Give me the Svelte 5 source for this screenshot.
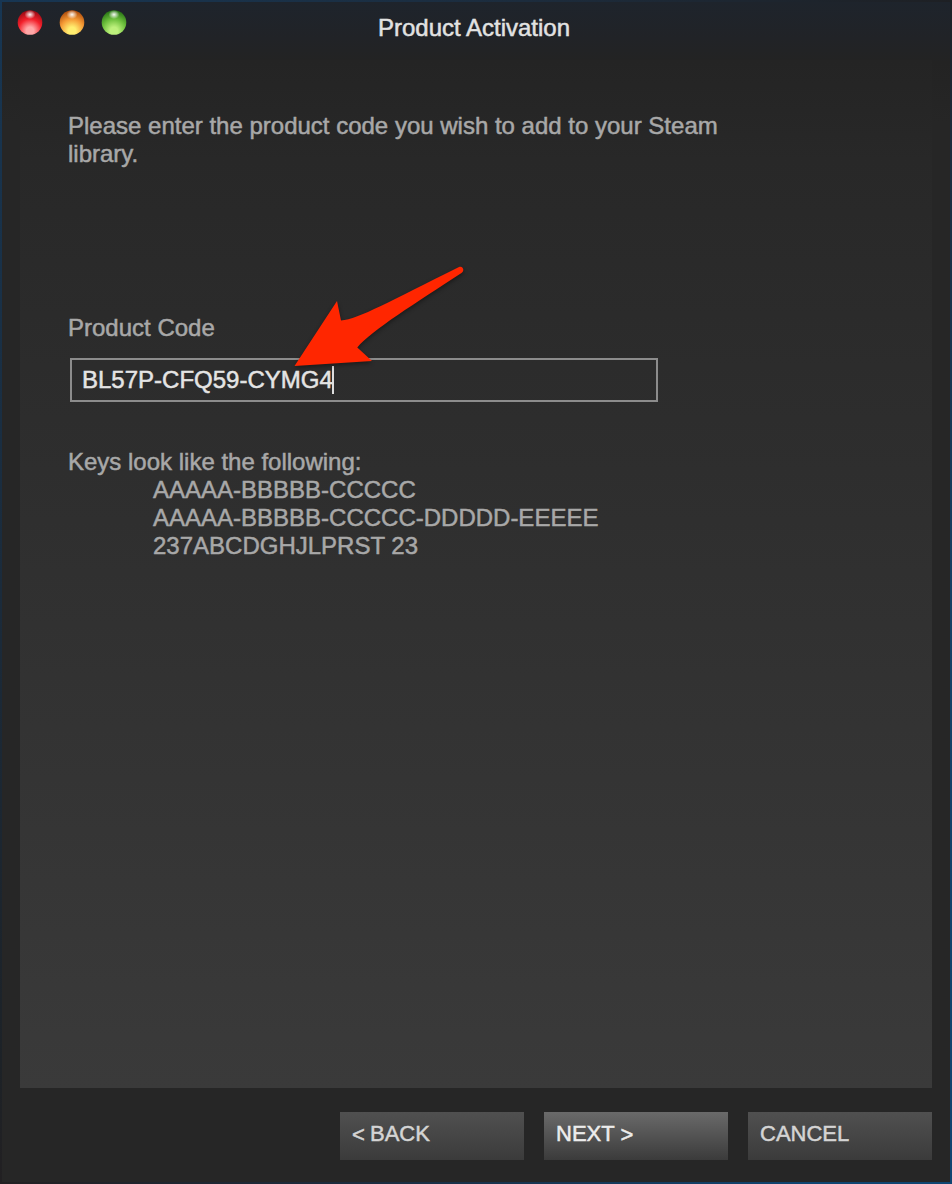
<script>
  let code = $state('BL57P-CFQ59-CYMG4');
  const examples = ['AAAAA-BBBBB-CCCCC', 'AAAAA-BBBBB-CCCCC-DDDDD-EEEEE', '237ABCDGHJLPRST 23'];
  const lights = [
    { name: 'close', edge: '#8d0710', mid: '#f3202b', glow: '#ffa8a8' },
    { name: 'minimize', edge: '#a34106', mid: '#f59a35', glow: '#ffee70' },
    { name: 'zoom', edge: '#1f6a10', mid: '#6cbf3c', glow: '#bdf07c' }
  ];
</script>

<div class="frame">
  <div class="window">
    <header>
      <div class="lights">
        {#each lights as l}
          <svg width="26" height="26" viewBox="0 0 26 26" aria-label={l.name}>
            <defs>
              <radialGradient id={l.name} cx="50%" cy="84%" r="86%">
                <stop offset="0" stop-color={l.glow} />
                <stop offset=".18" stop-color={l.glow} />
                <stop offset=".56" stop-color={l.mid} />
                <stop offset="1" stop-color={l.edge} />
              </radialGradient>
              <radialGradient id={l.name + '-shine'}>
                <stop offset="0" stop-color="#fff" stop-opacity=".95" />
                <stop offset="1" stop-color="#fff" stop-opacity="0" />
              </radialGradient>
            </defs>
            <circle cx="13" cy="12.500" r="12.300" fill={`url(#${l.name})`} />
            <ellipse cx="13" cy="4.600" rx="5.500" ry="4.500" fill={`url(#${l.name}-shine)`} />
          </svg>
        {/each}
      </div>
      <h1>Product Activation</h1>
    </header>
    <main>
      <p class="intro">Please enter the product code you wish to add to your Steam<br />library.</p>
      <div class="label">Product Code</div>
      <div class="field"><span>{code}</span><i></i></div>
      <div class="keys">
        <div>Keys look like the following:</div>
        <ul>{#each examples as e}<li>{e}</li>{/each}</ul>
      </div>
    </main>
    <footer>
      <button><span class="chevron back">&lt;</span> BACK</button>
      <button class="primary">NEXT <span class="chevron">&gt;</span></button>
      <button>CANCEL</button>
    </footer>
    <svg class="arrow" width="190" height="120" viewBox="285 260 190 120" aria-hidden="true">
      <path d="M294.5 366 L337 301 L341 320.5 C359 319 390 301 459 267 C463 265.5 465 270.5 461.5 273 C416 303 372 330 357.300 347.500 L372 361 Z" />
    </svg>
  </div>
</div>

<style>
  .frame {
    box-sizing: border-box;
    width: 952px;
    height: 1184px;
    padding: 2px;
    background:
      linear-gradient(90deg, #173653, #1c2c3d 55%, #1e2024) top / 100% 2px no-repeat,
      linear-gradient(90deg, #222022, #1c2d40 40%, #104571 85%) bottom / 100% 2px no-repeat,
      linear-gradient(#1d2025, #1c2c3d 12%, #164064 50%, #104571) right / 2px 100% no-repeat,
      linear-gradient(#173653, #1b2b3b 50%, #1d2227 90%, #222022) left / 2px 100% no-repeat;
    font: 24px/28px "Liberation Sans", Arial, sans-serif;
    color: #a8a8a8;
  }
  .window {
    position: relative;
    display: flex;
    flex-direction: column;
    height: 1180px;
    background: linear-gradient(#1e242c, #212327 36px, #232323 60px, #262626 120px);
    -webkit-text-stroke: .5px currentColor;
  }
  header {
    display: grid;
    grid-template-columns: 1fr auto 1fr;
    height: 58px;
  }
  .lights { display: flex; gap: 16px; padding: 8px 0 0 15px; }
  .lights svg { display: block; }
  h1 { margin: 12px 4px 0 0; font: inherit; color: #e2e2e2; }
  main {
    box-sizing: border-box;
    height: 1028px;
    margin: 0 18px;
    padding: 52px 48px 0;
    background: linear-gradient(#242424 0, #282828 100px, #3a3a3a 100%);
  }
  .intro { margin: 0; white-space: nowrap; }
  .label { margin-top: 146px; }
  .field {
    box-sizing: border-box;
    display: flex;
    align-items: center;
    width: 588px;
    height: 44px;
    margin: 16px 0 0 2px;
    padding: 0 0 1px 10px;
    border: 2px solid #8c8c8c;
    color: #e4e4e4;
  }
  .field i { width: 2px; height: 28px; margin-left: -1px; background: #ddd; }
  .keys { margin-top: 46px; }
  ul { margin: 0; padding: 0 0 0 85px; list-style: none; }
  footer {
    display: flex;
    justify-content: flex-end;
    gap: 20px;
    padding: 24px 18px 0;
  }
  button {
    box-sizing: border-box;
    width: 184px;
    height: 48px;
    padding: 0 12px 4px;
    border: 0;
    background: linear-gradient(#505050, #3b3b3b);
    color: #d4d4d4;
    font: 22px/28px "Liberation Sans", Arial, sans-serif;
    text-align: left;
    -webkit-text-stroke: .5px currentColor;
  }
  .primary { background: linear-gradient(#6a6a6a, #3b3b3b); color: #ececec; }
  .chevron { position: relative; top: 1px; }
  .back { margin-right: -1px; }
  .arrow {
    position: absolute;
    left: 283px;
    top: 258px;
    overflow: visible;
    filter: drop-shadow(0 2px 2px #0006);
  }
  .arrow path { fill: #ff2600; }
</style>
